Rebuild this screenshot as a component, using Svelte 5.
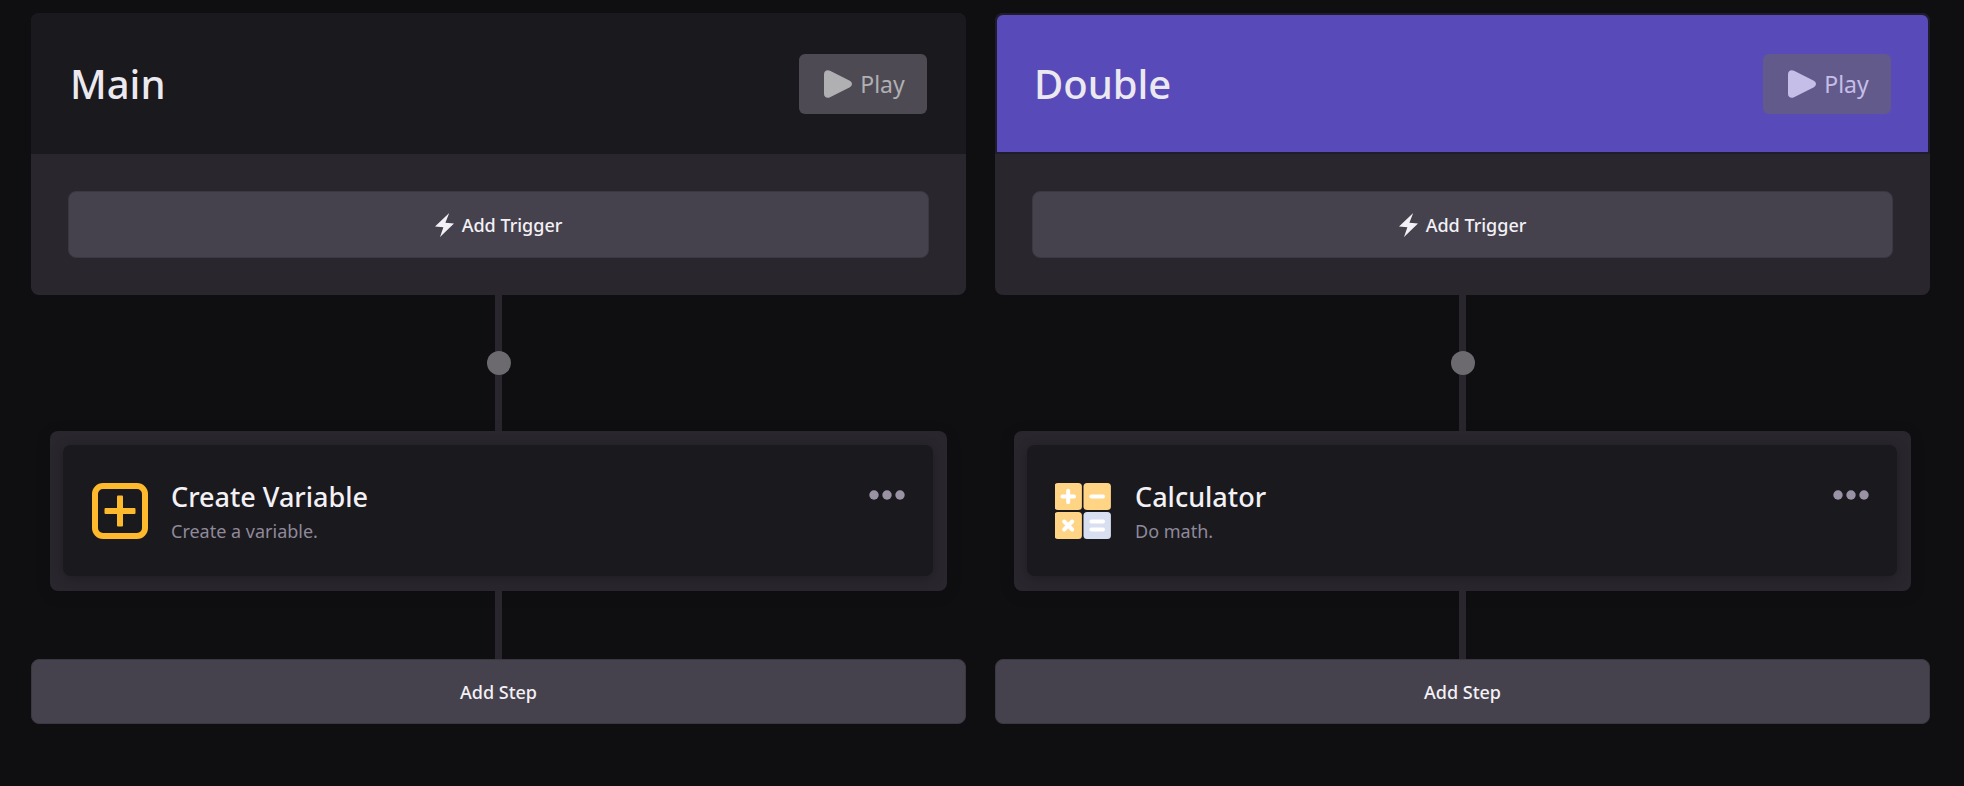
<script>
  const flows = [
    { name: 'Main', accent: false, icon: 'variable', title: 'Create Variable', text: 'Create a variable.' },
    { name: 'Double', accent: true, icon: 'calculator', title: 'Calculator', text: 'Do math.' }
  ];
</script>

<main class="board">
  {#each flows as flow (flow.name)}
    <section class="flow">
      <div class="card">
        <header class="head" class:accent={flow.accent}>
          <h1>{flow.name}</h1>
          <button class="play" type="button">
            <svg width="28" height="28" viewBox="0 0 28 28" aria-hidden="true">
              <path d="M0 4.2C0 .9 3 -.8 6 .7L25.4 10.6C28.8 12.4 28.8 15.6 25.4 17.4L6 27.3C3 28.8 0 27.1 0 23.8Z" fill="currentColor" />
            </svg>
            <span>Play</span>
          </button>
        </header>
        <div class="body">
          <button class="wide trigger" type="button">
            <svg width="19" height="24" viewBox="0 0 19 24" aria-hidden="true">
              <path d="M14.2 0 0 13.4 8.4 14.2 5 24 19 10.4 10.4 9.8Z" fill="currentColor" />
            </svg>
            <span>Add Trigger</span>
          </button>
        </div>
      </div>

      <div class="line long"><span class="dot"></span></div>

      <div class="step">
        <article class="inner">
          {#if flow.icon === 'variable'}
            <svg class="icon" width="58" height="58" viewBox="0 0 58 58" aria-hidden="true">
              <rect x="4" y="4" width="50" height="50" rx="8" fill="none" stroke="#ffb92c" stroke-width="6" />
              <rect x="13.5" y="26" width="31" height="6" rx="1" fill="#ffb92c" />
              <rect x="26" y="13.5" width="6" height="31" rx="1" fill="#ffb92c" />
            </svg>
          {:else}
            <svg class="icon" width="58" height="58" viewBox="1 0 58 58" aria-hidden="true">
              <rect x="0.5" y="1" width="27.4" height="27" rx="3.5" fill="#ffd485" />
              <rect x="29.5" y="1" width="27.4" height="27" rx="3.5" fill="#ffd485" />
              <rect x="0.5" y="30" width="27.4" height="27" rx="3.5" fill="#ffd485" />
              <rect x="29.5" y="30" width="27.4" height="27" rx="3.5" fill="#d8dff0" />
              <g stroke="#fff" stroke-width="4" stroke-linecap="round">
                <path d="M8.4 14.5h11.6M14.2 8.7v11.6" />
                <path d="M37.4 14.5h11.6" />
                <path d="M10.2 39.5l8 8M18.2 39.5l-8 8" />
                <path d="M37.4 39.6h11.6M37.4 47.4h11.6" />
              </g>
            </svg>
          {/if}
          <div class="copy">
            <h2>{flow.title}</h2>
            <p>{flow.text}</p>
          </div>
          <button class="more" type="button" aria-label="More options">
            <svg width="36" height="10" viewBox="0 0 36 10" aria-hidden="true">
              <circle cx="5" cy="5" r="4.7" fill="currentColor" />
              <circle cx="18" cy="5" r="4.7" fill="currentColor" />
              <circle cx="31" cy="5" r="4.7" fill="currentColor" />
            </svg>
          </button>
        </article>
      </div>

      <div class="line short"></div>
      <button class="wide add" type="button">Add Step</button>
    </section>
  {/each}
</main>

<style>
  :global(body) {
    margin: 0;
    background: #0f0f11;
  }
  .board {
    display: grid;
    grid-template-columns: repeat(2, minmax(0, 1fr));
    gap: 29px;
    padding: 13px 34px 13px 31px;
    color: #f3f1f6;
    font-family: "Noto Sans", sans-serif;
  }
  .flow {
    display: flex;
    flex-direction: column;
  }
  h1, h2, p {
    margin: 0;
    font-weight: 400;
  }
  button {
    box-sizing: border-box;
    margin: 0;
    font-family: inherit;
    cursor: pointer;
  }
  svg {
    display: block;
    flex: none;
  }
  .card {
    overflow: hidden;
    border-radius: 8px;
    background: #29262d;
  }
  .head {
    display: flex;
    align-items: center;
    justify-content: space-between;
    box-sizing: border-box;
    min-height: 141px;
    padding: 0 37px;
    border: 2px solid #1a191d;
    background: #1a191d;
  }
  .head.accent {
    border-color: #1f1c2b;
    border-radius: 8px 8px 0 0;
    background: #584bb9;
  }
  h1 {
    color: #ebe9ef;
    font-size: 40px;
    font-weight: 500;
    line-height: 56px;
  }
  .play {
    display: flex;
    align-items: center;
    justify-content: center;
    gap: 8px;
    width: 128px;
    height: 60px;
    padding: 0 0 0 3px;
    border: 0;
    border-radius: 6px;
    background: #4d4a54;
    color: #b0afb2;
    font-size: 23px;
    line-height: 32px;
  }
  .accent .play {
    background: #625a8b;
    color: #c5bee8;
  }
  .body {
    padding: 37px;
  }
  .wide {
    display: flex;
    align-items: center;
    justify-content: center;
    gap: 8px;
    width: 100%;
    padding: 0;
    border: 1px solid #3b3842;
    border-radius: 8px;
    background: #46424d;
    color: #f3f1f6;
    font-size: 18px;
    font-weight: 500;
    line-height: 24px;
  }
  .trigger {
    height: 67px;
  }
  .add {
    height: 65px;
  }
  .line {
    display: flex;
    align-items: center;
    justify-content: center;
    align-self: center;
    width: 7px;
    background: #29262d;
  }
  .long {
    height: 136px;
  }
  .short {
    height: 68px;
  }
  .dot {
    flex: none;
    width: 24px;
    height: 24px;
    border-radius: 50%;
    background: #6c6a6f;
  }
  .step {
    margin: 0 19px;
    padding: 14px 14px 15px 13px;
    border-radius: 8px;
    background: #29262d;
    box-shadow: 0 3px 16px rgba(0, 0, 0, 0.12);
  }
  .inner {
    display: flex;
    align-items: center;
    box-sizing: border-box;
    min-height: 131px;
    padding: 0 28px;
    border-radius: 8px;
    background: #1a191d;
    box-shadow: 0 2px 12px rgba(0, 0, 0, 0.25);
  }
  .copy {
    flex: 1;
    min-width: 0;
    padding: 4px 0 0 22px;
  }
  h2 {
    font-size: 27px;
    font-weight: 500;
    line-height: 36px;
  }
  p {
    color: #8f899b;
    font-size: 18px;
    line-height: 32px;
  }
  .more {
    align-self: flex-start;
    padding: 45px 0 0;
    border: 0;
    background: none;
    color: #9a93a5;
  }
</style>
